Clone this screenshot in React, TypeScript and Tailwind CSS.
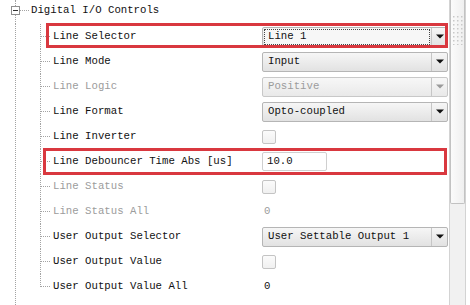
import React from "react";

type Row = {
  label: string;
  kind: "select" | "check" | "input" | "text";
  value?: string;
  disabled?: boolean;
  focus?: boolean;
  mark?: "sel" | "deb";
};

const rows: Row[] = [
  { label: "Line Selector", kind: "select", value: "Line 1", focus: true, mark: "sel" },
  { label: "Line Mode", kind: "select", value: "Input" },
  { label: "Line Logic", kind: "select", value: "Positive", disabled: true },
  { label: "Line Format", kind: "select", value: "Opto-coupled" },
  { label: "Line Inverter", kind: "check" },
  { label: "Line Debouncer Time Abs [us]", kind: "input", value: "10.0", mark: "deb" },
  { label: "Line Status", kind: "check", disabled: true },
  { label: "Line Status All", kind: "text", value: "0", disabled: true },
  { label: "User Output Selector", kind: "select", value: "User Settable Output 1" },
  { label: "User Output Value", kind: "check" },
  { label: "User Output Value All", kind: "text", value: "0" },
];

function Connector({ last }: { last: boolean }) {
  return (
    <svg width="12" height="25" className="shrink-0">
      <line x1="0.5" y1="0" x2="0.5" y2={last ? 13 : 25} stroke="#a3a3a3" strokeDasharray="1 1" />
      <line x1="1" y1="12.5" x2="10" y2="12.5" stroke="#a3a3a3" strokeDasharray="1 1" />
    </svg>
  );
}

function Arrow({ disabled }: { disabled?: boolean }) {
  return (
    <svg width="8" height="5">
      <polygon points="0,0.5 8,0.5 4,4.5" fill={disabled ? "#9a9a9a" : "#111"} />
    </svg>
  );
}

function Select({ row }: { row: Row }) {
  return (
    <div
      className={
        "flex h-[20px] w-[186px] rounded-[2px] border bg-gradient-to-b " +
        (row.disabled ? "border-[#c8c8c8] from-[#f7f7f7] to-[#e9e9e9]" : "border-[#b5b5b5] from-[#f6f6f6] to-[#e2e2e2]")
      }
    >
      <div className="flex flex-1 items-center p-[1px]">
        <div
          className={
            row.focus
              ? "flex h-full w-full items-center border border-dotted border-[#444] bg-[#f7f7f7] pl-[3px]"
              : "flex h-full w-full items-center pl-[4px]"
          }
        >
          <span className={row.disabled ? "text-[#9c9c9c]" : "text-[#111]"}>{row.value}</span>
        </div>
      </div>
      <div className="flex w-[16px] items-center justify-center border-l border-[#c6c6c6]">
        <Arrow disabled={row.disabled} />
      </div>
    </div>
  );
}

function Value({ row }: { row: Row }) {
  if (row.kind === "select") return <Select row={row} />;
  if (row.kind === "check")
    return (
      <div className="h-[14px] w-[14px] rounded-[2px] border border-[#c4c4c4] bg-gradient-to-b from-[#fbfbfb] to-[#f0f0f0]" />
    );
  if (row.kind === "input")
    return (
      <div className="flex h-[19px] w-[65px] items-center rounded-[2px] border border-[#cfcfcf] bg-white pl-[4px] text-[#111]">
        {row.value}
      </div>
    );
  return <span className={"pl-[2px] " + (row.disabled ? "text-[#9c9c9c]" : "text-[#111]")}>{row.value}</span>;
}

export default function App() {
  return (
    <div
      className="flex h-[305px] w-[470px] overflow-hidden bg-white text-[10.7px] leading-none"
      style={{ fontFamily: '"Liberation Mono", "DejaVu Sans Mono", monospace' }}
    >
      <div className="flex w-[449px] flex-col">
        {/* group header */}
        <div className="flex h-[24px] shrink-0">
          <div className="ml-[11px] flex w-[9px] flex-col items-center">
            <div className="h-[6px] border-l border-dotted border-[#a3a3a3]" />
            <div className="flex h-[9px] w-[9px] items-center justify-center border border-[#8f8f8f] bg-white">
              <div className="h-px w-[5px] bg-[#333]" />
            </div>
            <div className="flex-1 border-l border-dotted border-[#a3a3a3]" />
          </div>
          <div className="flex h-[20px] items-center">
            <div className="mr-[2px] w-[9px] border-t border-dotted border-[#a3a3a3]" />
            <span className="text-[#111]">Digital I/O Controls</span>
          </div>
        </div>

        {/* properties */}
        <div className="ml-[15px] flex-1 border-l border-dotted border-[#a3a3a3] pl-[24px]">
          {rows.map((row, i) => (
            <div key={row.label} className="relative flex h-[25px] items-center">
              <Connector last={i === rows.length - 1} />
              <div
                className={
                  "w-[210px] pl-[1px] " +
                  ((row.disabled && row.kind !== "select") || row.label === "Line Logic" ? "text-[#9c9c9c]" : "text-[#111]")
                }
              >
                {row.label}
              </div>
              <div className="flex w-[186px] items-center">
                <Value row={row} />
              </div>
              {row.mark === "sel" && (
                <div className="pointer-events-none absolute left-[6px] top-[-1px] h-[25px] w-[402px] border-[3px] border-[#d9383f]" />
              )}
              {row.mark === "deb" && (
                <div className="pointer-events-none absolute left-[3px] top-[-1px] h-[27px] w-[404px] border-[3px] border-[#d9383f]" />
              )}
            </div>
          ))}
        </div>
      </div>

      {/* vertical scrollbar */}
      <div className="flex w-[17px] flex-col border-x border-[#d3d3d3] bg-[#f1f1f1]">
        <div className="flex h-[204px] flex-col items-center rounded-b-[2px] border border-t-0 border-[#c2c2c2] bg-gradient-to-r from-[#fbfbfb] to-[#efefef] pt-[15px]">
          <svg width="11" height="30">
            {Array.from({ length: 8 }).map((_, r) =>
              [0, 1, 2].map((c) => (
                <rect key={r + "-" + c} x={1 + c * 4} y={1 + r * 4} width="1.5" height="1.5" fill="#c9c9c9" />
              ))
            )}
          </svg>
        </div>
      </div>
      <div className="flex-1 bg-white" />
    </div>
  );
}
